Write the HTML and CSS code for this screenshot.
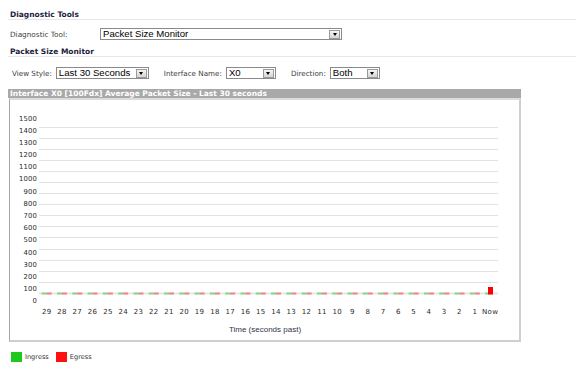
FILE: index.html
```html
<!DOCTYPE html>
<html>
<head>
<meta charset="utf-8">
<link rel="stylesheet" href="styles.css">
</head>
<body>
<div class="page">
  <div class="section-title">Diagnostic Tools</div>
  <div class="tool-row">
    <span class="tool-label">Diagnostic Tool:</span>
    <div class="select select-tool"><span class="select-text">Packet Size Monitor</span><span class="select-btn"></span></div>
  </div>
  <div class="section-title section-title-2">Packet Size Monitor</div>
  <div class="view-row">
    <span class="field-label">View Style:</span>
    <div class="select select-view"><span class="select-text">Last 30 Seconds</span><span class="select-btn"></span></div>
    <span class="field-label gap">Interface Name:</span>
    <div class="select select-small"><span class="select-text">X0</span><span class="select-btn"></span></div>
    <span class="field-label gap">Direction:</span>
    <div class="select select-small"><span class="select-text">Both</span><span class="select-btn"></span></div>
  </div>
  <div class="chart">
    <div class="chart-bar">Interface X0 [100Fdx] Average Packet Size - Last 30 seconds</div>
    <div class="chart-body">
      <svg class="plot" width="509" height="240" viewBox="0 0 509 240">
        <g class="grid">
          <line x1="29" x2="488" y1="27.5" y2="27.5"/>
          <line x1="29" x2="488" y1="38.5" y2="38.5"/>
          <line x1="29" x2="488" y1="49.5" y2="49.5"/>
          <line x1="29" x2="488" y1="60.5" y2="60.5"/>
          <line x1="29" x2="488" y1="71.5" y2="71.5"/>
          <line x1="29" x2="488" y1="82.5" y2="82.5"/>
          <line x1="29" x2="488" y1="93.5" y2="93.5"/>
          <line x1="29" x2="488" y1="104.5" y2="104.5"/>
          <line x1="29" x2="488" y1="115.5" y2="115.5"/>
          <line x1="29" x2="488" y1="126.5" y2="126.5"/>
          <line x1="29" x2="488" y1="137.5" y2="137.5"/>
          <line x1="29" x2="488" y1="149.5" y2="149.5"/>
          <line x1="29" x2="488" y1="160.5" y2="160.5"/>
          <line x1="29" x2="488" y1="171.5" y2="171.5"/>
          <line x1="29" x2="488" y1="182.5" y2="182.5"/>
          <line class="base" x1="29" x2="488" y1="193.5" y2="193.5"/>
        </g>
        <line class="ingress" x1="31.7" x2="481" y1="193.5" y2="193.5"/>
        <line class="egress" x1="36.7" x2="472" y1="193.5" y2="193.5"/>
        <rect class="egress-bar" x="478" y="187" width="5" height="7.5"/>
        <g class="ylabels">
          <text x="27" y="20.5">1500</text>
          <text x="27" y="32.7">1400</text>
          <text x="27" y="44.9">1300</text>
          <text x="27" y="57">1200</text>
          <text x="27" y="69.2">1100</text>
          <text x="27" y="81.4">1000</text>
          <text x="27" y="93.6">900</text>
          <text x="27" y="105.8">800</text>
          <text x="27" y="117.9">700</text>
          <text x="27" y="130.1">600</text>
          <text x="27" y="142.3">500</text>
          <text x="27" y="154.5">400</text>
          <text x="27" y="166.7">300</text>
          <text x="27" y="178.8">200</text>
          <text x="27" y="191">100</text>
          <text x="27" y="203.2">0</text>
        </g>
        <g class="xlabels">
          <text x="36.7" y="213.5">29</text>
          <text x="52" y="213.5">28</text>
          <text x="67.3" y="213.5">27</text>
          <text x="82.6" y="213.5">26</text>
          <text x="97.9" y="213.5">25</text>
          <text x="113.2" y="213.5">24</text>
          <text x="128.4" y="213.5">23</text>
          <text x="143.7" y="213.5">22</text>
          <text x="159" y="213.5">21</text>
          <text x="174.3" y="213.5">20</text>
          <text x="189.6" y="213.5">19</text>
          <text x="204.9" y="213.5">18</text>
          <text x="220.2" y="213.5">17</text>
          <text x="235.5" y="213.5">16</text>
          <text x="250.8" y="213.5">15</text>
          <text x="266.1" y="213.5">14</text>
          <text x="281.3" y="213.5">13</text>
          <text x="296.6" y="213.5">12</text>
          <text x="311.9" y="213.5">11</text>
          <text x="327.2" y="213.5">10</text>
          <text x="342.5" y="213.5">9</text>
          <text x="357.8" y="213.5">8</text>
          <text x="373.1" y="213.5">7</text>
          <text x="388.4" y="213.5">6</text>
          <text x="403.7" y="213.5">5</text>
          <text x="419" y="213.5">4</text>
          <text x="434.2" y="213.5">3</text>
          <text x="449.5" y="213.5">2</text>
          <text x="464.8" y="213.5">1</text>
          <text x="480.1" y="213.5">Now</text>
        </g>
        <text class="axis-title" x="255" y="232">Time (seconds past)</text>
      </svg>
    </div>
  </div>
  <div class="legend">
    <span class="swatch swatch-in"></span><span class="legend-text">Ingress</span>
    <span class="swatch swatch-out"></span><span class="legend-text">Egress</span>
  </div>
</div>
</body>
</html>
```
FILE: styles.css
```css
html, body {
  margin: 0;
  padding: 0;
  background: #ffffff;
}
body {
  font-family: "DejaVu Sans", Verdana, sans-serif;
  color: #333;
}
.page {
  padding-left: 8px;
}
.section-title {
  padding: 10px 0 0 2px;
  line-height: 9px;
  height: 9px;
  font-size: 7.5px;
  font-weight: bold;
  color: #1c1c3a;
  border-bottom: 1px solid #e8e8e8;
}
.section-title-2 {
  padding-top: 7px;
}
.tool-row {
  display: flex;
  align-items: center;
  margin-top: 8px;
  height: 12px;
  padding-left: 2px;
}
.tool-label {
  width: 90px;
  font-size: 7.3px;
  color: #3c3c3c;
  white-space: nowrap;
}
.view-row {
  display: flex;
  align-items: center;
  margin-top: 10px;
  height: 12px;
  padding-left: 4px;
}
.field-label {
  font-size: 7.2px;
  color: #3c3c3c;
  margin-right: 4px;
  white-space: nowrap;
}
.field-label.gap {
  margin-left: 15px;
}
.select {
  box-sizing: border-box;
  height: 12px;
  border: 1px solid #8a8a8a;
  background: #fff;
  display: flex;
  align-items: center;
  justify-content: space-between;
  padding: 0 1px 0 2px;
  flex: none;
}
.select-tool { width: 242px; }
.select-view { width: 93px; }
.select-small { width: 50px; }
.select-text {
  font-family: "Liberation Sans", Arial, sans-serif;
  font-size: 9.6px;
  line-height: 10px;
  color: #000;
  white-space: nowrap;
  min-width: 0;
}
.select-btn {
  box-sizing: border-box;
  flex: none;
  width: 11px;
  height: 9px;
  margin-left: 1px;
  border: 1px solid #9a9a9a;
  background: linear-gradient(#f4f4f4, #d6d6d6);
  display: flex;
  align-items: center;
  justify-content: center;
}
.select-btn::after {
  content: "";
  width: 0;
  height: 0;
  border-left: 2.5px solid transparent;
  border-right: 2.5px solid transparent;
  border-top: 3px solid #000;
}
.chart {
  margin-top: 10px;
  width: 513px;
}
.chart-bar {
  height: 9px;
  line-height: 9px;
  background: #a9a9a9;
  color: #ffffff;
  font-size: 7.5px;
  font-weight: bold;
  padding-left: 2px;
  white-space: nowrap;
  overflow: hidden;
}
.chart-body {
  margin-left: 1px;
  height: 240px;
  border-left: 1px solid #a6a6a6;
  border-top: 2px solid #dcdcdc;
  border-right: 2px solid #cfcfcf;
  border-bottom: 2px solid #cfcfcf;
}
.plot {
  display: block;
}
.grid line {
  stroke: #e2e2e2;
  stroke-width: 1;
}
.grid line.base {
  stroke: #e6e6e6;
  stroke-width: 2;
}
.ingress {
  stroke: #86d886;
  stroke-width: 2;
  stroke-dasharray: 5 10.29;
}
.egress {
  stroke: #f08484;
  stroke-width: 2;
  stroke-dasharray: 5 10.29;
}
.egress-bar {
  fill: #ff0000;
}
.ylabels text {
  font-family: "DejaVu Sans", Verdana, sans-serif;
  font-size: 6.8px;
  letter-spacing: 0.2px;
  fill: #2a2a2a;
  text-anchor: end;
}
.xlabels text {
  font-family: "DejaVu Sans", Verdana, sans-serif;
  font-size: 7px;
  letter-spacing: 0.3px;
  fill: #2a2a2a;
  text-anchor: middle;
}
.axis-title {
  font-family: "Liberation Sans", Arial, sans-serif;
  font-size: 8px;
  fill: #33334a;
  text-anchor: middle;
}
.legend {
  display: flex;
  align-items: center;
  margin-top: 10px;
  padding-left: 3px;
  height: 10px;
}
.swatch {
  width: 11px;
  height: 10px;
  margin-right: 3px;
}
.swatch-in { background: #1ec81e; }
.swatch-out { background: #ff1010; }
.legend-text {
  font-size: 6.6px;
  color: #333;
  margin-right: 7px;
}
```
